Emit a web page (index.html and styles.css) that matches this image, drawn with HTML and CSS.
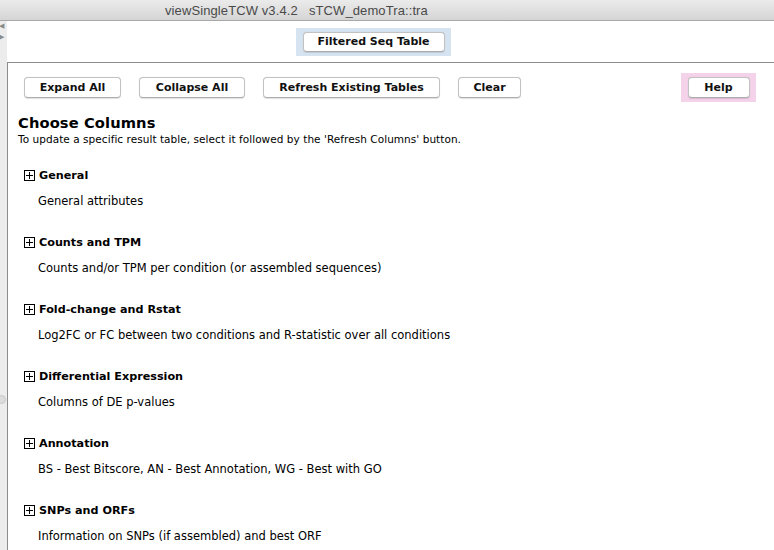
FILE: index.html
```html
<!DOCTYPE html>
<html>
<head>
<meta charset="utf-8">
<link rel="stylesheet" href="styles.css">
</head>
<body>
<div class="window">
  <div class="titlebar"><span class="title">viewSingleTCW v3.4.2&nbsp;&nbsp;&nbsp;sTCW_demoTra::tra</span></div>
  <div class="main">
    <div class="strip">
      <span class="arrow">&#9664;</span>
      <span class="arrow">&#9654;</span>
      <span class="knob"></span>
    </div>
    <div class="content">
      <div class="topbar">
        <div class="hl hl-blue"><button class="btn btn-filter">Filtered Seq Table</button></div>
      </div>
      <div class="panel">
        <div class="toolbar">
          <button class="btn b-expand">Expand All</button>
          <button class="btn b-collapse">Collapse All</button>
          <button class="btn b-refresh">Refresh Existing Tables</button>
          <button class="btn b-clear">Clear</button>
          <div class="hl hl-pink"><button class="btn b-help">Help</button></div>
        </div>
        <h1 class="heading">Choose Columns</h1>
        <p class="sub">To update a specific result table, select it followed by the 'Refresh Columns' button.</p>
        <div class="sections">
          <div class="sec"><div class="sec-head"><span class="plus"></span><span class="sec-title">General</span></div><div class="sec-desc">General attributes</div></div>
          <div class="sec"><div class="sec-head"><span class="plus"></span><span class="sec-title">Counts and TPM</span></div><div class="sec-desc">Counts and/or TPM per condition (or assembled sequences)</div></div>
          <div class="sec"><div class="sec-head"><span class="plus"></span><span class="sec-title">Fold-change and Rstat</span></div><div class="sec-desc">Log2FC or FC between two conditions and R-statistic over all conditions</div></div>
          <div class="sec"><div class="sec-head"><span class="plus"></span><span class="sec-title">Differential Expression</span></div><div class="sec-desc">Columns of DE p-values</div></div>
          <div class="sec"><div class="sec-head"><span class="plus"></span><span class="sec-title">Annotation</span></div><div class="sec-desc">BS - Best Bitscore, AN - Best Annotation, WG - Best with GO</div></div>
          <div class="sec"><div class="sec-head"><span class="plus"></span><span class="sec-title">SNPs and ORFs</span></div><div class="sec-desc">Information on SNPs (if assembled) and best ORF</div></div>
        </div>
      </div>
    </div>
  </div>
</div>
</body>
</html>
```
FILE: styles.css
```css
html, body {
  margin: 0;
  padding: 0;
  background: #ffffff;
}
.window {
  width: 774px;
  height: 550px;
  overflow: hidden;
  font-family: "DejaVu Sans", sans-serif;
  color: #000;
  display: flex;
  flex-direction: column;
}
.titlebar {
  height: 20px;
  flex: none;
  background: linear-gradient(#ebebeb, #d5d5d5);
  border-bottom: 1px solid #a8a8a8;
  display: flex;
  align-items: center;
  padding-left: 165px;
  box-sizing: content-box;
}
.title {
  font-family: "Liberation Sans", sans-serif;
  font-size: 13px;
  color: #4a4a4a;
  letter-spacing: 0.1px;
}
.main {
  flex: 1;
  display: flex;
  min-height: 0;
}
.strip {
  width: 7px;
  flex: none;
  background: #ececec;
  position: relative;
}
.arrow {
  position: absolute;
  left: -1px;
  font-size: 7px;
  color: #8a8a8a;
  line-height: 7px;
}
.arrow:nth-child(1) { top: 2px; }
.arrow:nth-child(2) { top: 13px; }
.knob {
  position: absolute;
  left: -3px;
  top: 374px;
  width: 7px;
  height: 7px;
  border-radius: 50%;
  background: #dcdcdc;
  border: 1px solid #c8c8c8;
}
.content {
  flex: 1;
  display: flex;
  flex-direction: column;
  min-width: 0;
}
.topbar {
  height: 41px;
  flex: none;
  display: flex;
  align-items: flex-start;
  padding-top: 7px;
  padding-left: 289px;
  box-sizing: border-box;
}
.hl {
  display: flex;
  align-items: center;
  justify-content: center;
  box-sizing: border-box;
}
.hl-blue {
  background: #d6e3f1;
  width: 155px;
  height: 28px;
}
.hl-pink {
  background: #f4d3ea;
  width: 75px;
  height: 29px;
  margin-left: auto;
  margin-right: 18px;
  margin-top: -4px;
  margin-bottom: -4px;
}
.btn {
  font-family: "DejaVu Sans", sans-serif;
  font-weight: bold;
  font-size: 11px;
  color: #111;
  background: #ffffff;
  border: 1px solid #c2c2c2;
  border-bottom-color: #adadad;
  border-radius: 4px;
  height: 21px;
  padding: 0;
  box-shadow: 0 0.5px 1px rgba(0,0,0,0.12);
  line-height: 19px;
  box-sizing: border-box;
}
.btn-filter { width: 142px; height: 20px; line-height: 18px; margin-top: 0; }
.b-expand { width: 97px; }
.b-collapse { width: 106px; }
.b-refresh { width: 177px; }
.b-clear { width: 63px; }
.b-help { width: 62px; }
.panel {
  flex: 1;
  border-top: 1px solid #8c8c8c;
  border-left: 1px solid #8c8c8c;
  padding-left: 10px;
}
.toolbar {
  display: flex;
  align-items: center;
  gap: 18px;
  margin-top: 14px;
  padding-left: 6px;
  height: 21px;
}
.heading {
  margin: 15px 0 0 0;
  font-family: "DejaVu Sans", sans-serif;
  font-size: 14.7px;
  font-weight: bold;
  line-height: 20px;
  letter-spacing: 0.1px;
}
.sub {
  margin: 0;
  font-size: 10.5px;
  line-height: 13px;
  letter-spacing: 0.05px;
}
.sections {
  margin-top: 21px;
  padding-left: 6px;
}
.sec {
  height: 67px;
}
.sec-head {
  display: flex;
  align-items: center;
  height: 16px;
}
.plus {
  width: 9px;
  height: 9px;
  border: 1px solid #000;
  position: relative;
  margin-right: 4px;
  flex: none;
}
.plus::before {
  content: "";
  position: absolute;
  left: 1px;
  right: 1px;
  top: 4px;
  height: 1px;
  background: #000;
}
.plus::after {
  content: "";
  position: absolute;
  top: 1px;
  bottom: 1px;
  left: 4px;
  width: 1px;
  background: #000;
}
.sec-title {
  font-weight: bold;
  font-size: 11.2px;
}
.sec-desc {
  margin-top: 11px;
  padding-left: 14px;
  font-size: 11.5px;
  line-height: 14px;
}
```
